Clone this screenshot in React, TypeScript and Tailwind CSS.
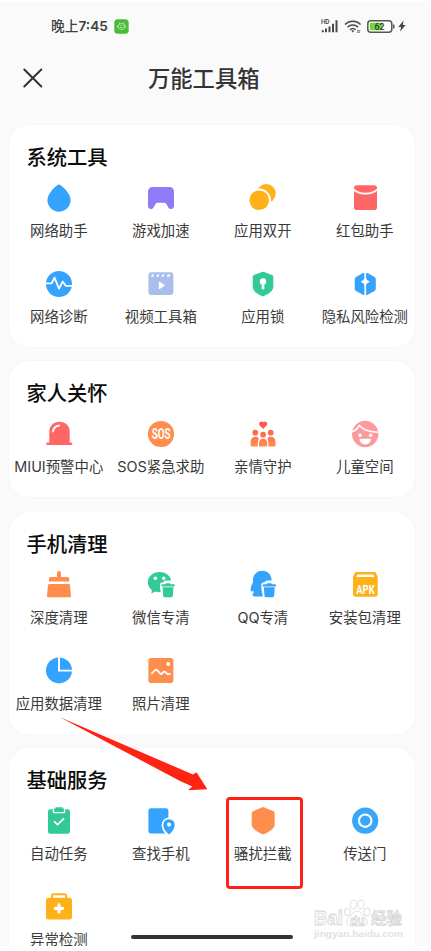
import React from 'react';

type Tool = { label: string; icon: React.ReactNode };
type Section = { title: string; tools: Tool[]; className?: string };

const Icon: React.FC<{ children: React.ReactNode }> = ({ children }) => (
  <svg viewBox="0 0 28 28" className="w-7 h-7 shrink-0 overflow-visible">{children}</svg>
);

// Small bin in the corner of the cleaner icons
const Bin: React.FC<{ color: string }> = ({ color }) => (
  <g>
    <path d="M13 17v-3.500q0-1.800 2-2l1.300-.2q.6-1.900 2.500-1.900h9.500v19H15z" fill="#fff" />
    <path d="M18.300 13.200q.2-1 1.200-1h3q1 0 1.200 1h2.800q1.300 0 1.300 1.200t-1.300 1.200H15.600q-1.300 0-1.300-1.200t1.300-1.200z" fill={color} />
    <path d="M15.600 16.200h10.800l-.5 8.300a1.800 1.800 0 0 1-1.800 1.700h-6.200a1.800 1.800 0 0 1-1.800-1.700z" fill={color} />
  </g>
);

const sections: Section[] = [
  {
    title: '系统工具',
    tools: [
      {
        label: '网络助手',
        icon: <path d="M14 .5c1.800 0 11.600 8.200 11.600 15.600a11.600 11.600 0 0 1-23.200 0C2.400 8.700 12.200.5 14 .5z" fill="#33a3fd" />,
      },
      {
        label: '游戏加速',
        icon: <path d="M5.500 3h17A4.500 4.500 0 0 1 27 7.500V22c0 2.700-2.300 3.400-4.200 2.700-2.200-.8-2.800-5.900-5.300-5.900h-7c-2.500 0-3.100 5.100-5.300 5.900C3.300 25.400 1 24.700 1 22V7.500A4.500 4.500 0 0 1 5.500 3z" fill="#8f7bf8" />,
      },
      {
        label: '应用双开',
        icon: (
          <>
            <circle cx="17.300" cy="9.500" r="9.400" fill="#ffb119" />
            <circle cx="10.200" cy="16.300" r="11.800" fill="#fff" />
            <circle cx="10.200" cy="16.300" r="9.800" fill="#ffb119" />
          </>
        ),
      },
      {
        label: '红包助手',
        icon: (
          <>
            <rect x="3" y="1.200" width="23" height="24.800" rx="2.800" fill="#ff6766" />
            <path d="M2 4.800c6 6.300 19 6.300 25 0" fill="none" stroke="#fff" strokeWidth="1.700" />
          </>
        ),
      },
      {
        label: '网络诊断',
        icon: (
          <>
            <circle cx="14" cy="14" r="13" fill="#33a3fd" />
            <path d="M.5 13.400h6.200l2.800-5.800L14 18.600l3.700-7 3 4.200h7" fill="none" stroke="#fff" strokeWidth="1.800" strokeLinejoin="round" />
          </>
        ),
      },
      {
        label: '视频工具箱',
        icon: (
          <>
            <rect x="1.400" y="2.300" width="25" height="22.700" rx="3" fill="#a9beea" />
            <path d="M4 6.800l1-2.200h2.200l-1 2.200zM9.200 6.800l1-2.200h2.200l-1 2.200zM14.400 6.800l1-2.200h2.200l-1 2.200zM19.600 6.800l1-2.200h2.800l-1 2.200z" fill="#fff" />
            <path d="M12.300 12v6.800l5-3.400z" fill="#fff" stroke="#fff" strokeLinejoin="round" />
          </>
        ),
      },
      {
        label: '应用锁',
        icon: (
          <>
            <path d="M12.900 2q1.100-.4 2.200 0l8 3.100q1.200.5 1.200 1.900v9.500c0 4.500-4.500 7.200-9.300 9.500q-1 .4-2 0C8.200 23.700 3.700 21 3.700 16.500V7q0-1.400 1.200-1.900z" fill="#32ca97" />
            <circle cx="14" cy="11.500" r="3.200" fill="#fff" />
            <path d="M14 12v6.300" stroke="#fff" strokeWidth="2.600" strokeLinecap="round" />
          </>
        ),
      },
      {
        label: '隐私风险检测',
        icon: (
          <>
            <path d="M13.400 2.900v22.200q-.9 0-1.900-.5L5 20.900q-1.300-.7-1.300-2.100V9q0-1.400 1.300-2.100l6.500-3.600q1-.5 1.900-.4zM15.100 2.900v22.200q.9 0 1.900-.5l6.500-3.700q1.300-.7 1.300-2.100V9q0-1.400-1.300-2.100L17 3.300q-1-.5-1.900-.4z" fill="#33a3fd" />
            <path d="M14.250 7.500q.9 3.300 4.200 4.200-3.300.9-4.200 4.200-.9-3.300-4.200-4.200 3.300-.9 4.200-4.200z" fill="#fff" stroke="#fff" strokeWidth=".6" />
          </>
        ),
      },
    ],
  },
  {
    title: '家人关怀',
    className: 'mb-px',
    tools: [
      {
        label: 'MIUI预警中心',
        icon: (
          <>
            <path d="M4.300 23.500V11.500C4.300 6 8.800 1.800 14.500 1.800s10.200 4.200 10.200 9.700v12z" fill="#ff6766" />
            <rect x="1.300" y="22.600" width="26" height="2.500" rx="1" fill="#ff6766" />
            <path d="M8 11.500c.3-3 2.800-5.500 6.200-6" fill="none" stroke="#fff" strokeWidth="1.800" strokeLinecap="round" />
          </>
        ),
      },
      {
        label: 'SOS紧急求助',
        icon: (
          <>
            <circle cx="14" cy="14" r="13.100" fill="#ff8d4e" />
            <text x="4.700" y="19.200" textLength="19" lengthAdjust="spacingAndGlyphs" fill="#fff" className="font-['Roboto',sans-serif] text-[14px] font-bold">SOS</text>
          </>
        ),
      },
      {
        label: '亲情守护',
        icon: (
          <>
            <defs>
              <linearGradient id="family" gradientUnits="userSpaceOnUse" x1="0" y1="2" x2="0" y2="26">
                <stop offset="0" stopColor="#fb5348" />
                <stop offset="1" stopColor="#ff8e50" />
              </linearGradient>
            </defs>
            <g fill="url(#family)">
              <path d="M14.200 9l-3.300-3.300a2.400 2.400 0 0 1 3.300-3.500 2.400 2.400 0 0 1 3.300 3.500z" />
              <circle cx="6.300" cy="12.700" r="2.900" />
              <circle cx="21.700" cy="12.700" r="2.900" />
              <path d="M1.700 26.500v-4.700c0-3 1.800-5 4.600-5 1.500 0 2.300.3 3.300 1.200.5 1.500-.8 2.800-.8 5v3.500z" />
              <path d="M26.500 26.500v-4.700c0-3-1.800-5-4.600-5-1.500 0-2.300.3-3.300 1.200-.5 1.500.8 2.800.8 5v3.500z" />
              <circle cx="14.100" cy="14.700" r="2.900" />
              <path d="M10 26.500v-3.300c0-2.700 1.500-4.400 4.100-4.400s4.100 1.700 4.100 4.400v3.300z" />
            </g>
          </>
        ),
      },
      {
        label: '儿童空间',
        icon: (
          <>
            <circle cx="14.200" cy="14" r="13.200" fill="#fb9b9d" />
            <path d="M.8 11.800C4 11 6.300 8.700 8.300 5.500c4 4.500 9.700 6.600 19.300 6.800" fill="none" stroke="#fff" strokeWidth="1.500" />
            <circle cx="9" cy="15.300" r="1.700" fill="#fff" />
            <circle cx="19.700" cy="15.300" r="1.700" fill="#fff" />
            <path d="M8.500 18.700h11.400c0 3.300-2.400 5.700-5.700 5.700s-5.700-2.400-5.700-5.700z" fill="#fff" />
          </>
        ),
      },
    ],
  },
  {
    title: '手机清理',
    tools: [
      {
        label: '深度清理',
        icon: (
          <g fill="#ff8d4e">
            <path d="M12 6V2.100a2 2 0 0 1 4 0V6h6.300q2 0 2 2v2.500H3.900V8q0-2 2-2z" />
            <path d="M4.500 13h19q1.300 0 1.500 1.300l1 10.400q.1 1.600-1.500 1.600h-21Q1.900 26.300 2 24.700l1-10.400Q3.200 13 4.500 13z" />
          </g>
        ),
      },
      {
        label: '微信专清',
        icon: (
          <>
            <path d="M12.600 1C6 1 .8 5.500.8 11.300c0 3.200 1.600 5.900 4.100 7.800L4.300 22.500l4-2c1.300.5 2.800.8 4.300.8 6.600 0 11.800-4.500 11.800-10S19.200 1 12.600 1z" fill="#32ca97" />
            <circle cx="8.400" cy="7.300" r="1.700" fill="#fff" />
            <circle cx="16.700" cy="7.300" r="1.700" fill="#fff" />
            <Bin color="#32ca97" />
          </>
        ),
      },
      {
        label: 'QQ专清',
        icon: (
          <>
            <path d="M13.300-.2c5.500 0 9.300 4 9.300 9.400v7H19v9.300H6.500c-2.600 0-3.500-1.400-2.700-2.800.5-.9 1.200-1.300 1.200-1.300s-.5-.8-.9-1.600c-.9 1-2.200 1-2.400-.8-.3-2.600 1-5.300 2.300-7.500V9.200c0-5.400 3.800-9.400 9.300-9.400z" fill="#33a3fd" />
            <g className="-translate-x-[0.7px]"><Bin color="#33a3fd" /></g>
          </>
        ),
      },
      {
        label: '安装包清理',
        icon: (
          <>
            <path d="M5.500 1h17.700q1.400 0 1.900 1.300L26.700 6v17q0 2.700-2.700 2.700H4.700Q2 25.700 2 23V6l1.600-3.700Q4.100 1 5.500 1z" fill="#ffb119" />
            <path d="M7.300 3.400h14q1 0 1.300.8l.8 1.900H5.200l.8-1.900q.3-.8 1.300-.8z" fill="#fff" />
            <text x="5.200" y="22.700" textLength="18.500" lengthAdjust="spacingAndGlyphs" fill="#fff" className="font-['Roboto',sans-serif] text-[13px] font-bold">APK</text>
          </>
        ),
      },
      {
        label: '应用数据清理',
        icon: (
          <>
            <circle cx="14" cy="13.400" r="13" fill="#33a3fd" />
            <path d="M14 0v13.600h14" fill="none" stroke="#fff" strokeWidth="1.900" />
          </>
        ),
      },
      {
        label: '照片清理',
        icon: (
          <>
            <rect x="1.400" y="1" width="25" height="25" rx="2.700" fill="#ff8d4e" />
            <circle cx="21.300" cy="7" r="1.900" fill="#fff" />
            <path d="M4.300 16.800l3.700-3.500q1.200-1 2.300 0l3 3.400q.7.600 1.500 0l1.800-1.700q.9-.7 1.800 0l1.700 1.800q.6.500 1.400.3l2-.5" fill="none" stroke="#fff" strokeWidth="1.800" strokeLinejoin="round" />
          </>
        ),
      },
    ],
  },
  {
    title: '基础服务',
    tools: [
      {
        label: '自动任务',
        icon: (
          <>
            <rect x="3" y="2.300" width="22" height="24.400" rx="2.200" fill="#32ca97" />
            <path d="M7.800 0h12.400v5q0 1.300-1.300 1.300H9.100Q7.800 6.300 7.800 5z" fill="#fff" />
            <path d="M10.500.3h7.200v1.200H19V4q0 1-1 1h-8q-1 0-1-1V1.500h1.500z" fill="#32ca97" />
            <path d="M9 14.300l3.600 3.300 6.500-6.200" fill="none" stroke="#fff" strokeWidth="1.800" />
          </>
        ),
      },
      {
        label: '查找手机',
        icon: (
          <>
            <rect x="1.400" y="1.200" width="20" height="25.200" rx="2.500" fill="#33a3fd" />
            <path d="M22 28c-3-2.700-5.700-6.300-5.700-10a5.700 5.700 0 0 1 11.400 0c0 3.700-2.700 7.300-5.700 10z" fill="#33a3fd" stroke="#fff" strokeWidth="3.400" />
            <path d="M22 27.500c-3-2.700-5.700-5.900-5.700-9.600a5.700 5.700 0 0 1 11.400 0c0 3.700-2.700 6.900-5.700 9.600z" fill="#33a3fd" />
            <circle cx="22" cy="17.600" r="2.100" fill="#fff" />
          </>
        ),
      },
      {
        label: '骚扰拦截',
        icon: <path d="M13 .4q1.200-.6 2.400 0l9.100 3.900q1.200.5 1.200 1.900v11.500c0 3.800-5.700 7-10.300 9.300q-1.200.6-2.400 0C8.400 24.700 2.700 21.500 2.700 17.700V6.200q0-1.400 1.200-1.900z" fill="#ff8d4e" />,
      },
      {
        label: '传送门',
        icon: (
          <>
            <circle cx="14.200" cy="13.700" r="13.100" fill="#38a6f9" />
            <circle cx="14.200" cy="13.700" r="6.200" fill="none" stroke="#fff" strokeWidth="2.100" />
          </>
        ),
      },
      {
        label: '异常检测',
        icon: (
          <>
            <rect x="1" y="4.800" width="26" height="21.700" rx="2.500" fill="#ffb119" />
            <path d="M7 6V2.700q0-1.500 1.500-1.500h11q1.500 0 1.500 1.500V6" fill="none" stroke="#ffb119" strokeWidth="2" />
            <path d="M14 11.900v7M10.500 15.400h7" stroke="#fff" strokeWidth="3.200" strokeLinecap="round" />
          </>
        ),
      },
    ],
  },
];

const StatusBar: React.FC = () => (
  <div className="flex items-center justify-between h-[50px] pl-[51px] pr-[24px] text-[#404040]">
    <div className="flex items-center">
      <span className="text-[13.700px] font-medium leading-5 w-[58px] whitespace-nowrap">
        晚上<span className="font-semibold">7:45</span>
      </span>
      <svg viewBox="0 0 15 15" className="w-[15px] h-[15px] ml-[5px]">
        <rect x=".3" y=".3" width="14.400" height="14.400" rx="3.500" fill="#4bb93a" />
        <g fill="none" stroke="#d8f3d0" strokeWidth=".7">
          <rect x="4.300" y="4.700" width="6.500" height="5.600" rx="2.500" />
          <path d="M5 3.500l.8 1.300M10 3.500l-.8 1.300M3.500 6.500v2M11.600 6.500v2M6 8.200q1.500 1 3 0M6 6.600h.8M8.300 6.600h.8" />
        </g>
      </svg>
    </div>
    <div className="flex items-center">
      <svg viewBox="0 0 18 15" className="w-[18px] h-[15px]">
        <text x="0" y="5.400" textLength="8.500" fill="#404040" className="font-['Roboto',sans-serif] text-[6.500px] font-medium">HD</text>
        <path d="M1.800 13.200v-2M5 13.200V9.500M8.500 13.200V7.500M12 13.200V4.800M15.500 13.200V1.300" stroke="#4a4a4a" strokeWidth="2" />
      </svg>
      <svg viewBox="0 0 18 15" className="w-[18px] h-[15px] ml-[5px]">
        <g fill="none" stroke="#4a4a4a" strokeWidth="1.500">
          <path d="M1 5.500c4.400-4.200 11.200-4.200 15.600 0M3.500 8.200c3-2.900 7.600-2.900 10.600 0M6 10.800c1.600-1.500 4-1.500 5.600 0" />
          <path d="M13 11.700h3.300M12.800 13.200h3.300" strokeWidth=".8" />
        </g>
        <path d="M7.200 11.700q1.600-1 3.200 0l-1.600 1.900z" fill="#4a4a4a" />
      </svg>
      <svg viewBox="0 0 28 13" className="w-7 h-[13px] ml-[5px]">
        <rect x=".8" y=".8" width="24" height="11.400" rx="3" fill="#fff" stroke="#555" strokeWidth="1.500" />
        <rect x="2.800" y="2.800" width="12.500" height="7.400" rx="1" fill="#6fd83d" />
        <path d="M26.700 4.500v4" stroke="#555" strokeWidth="1.500" />
        <text x="7.500" y="9.500" textLength="10" lengthAdjust="spacingAndGlyphs" fill="#333" className="font-['Roboto',sans-serif] text-[8.500px] font-medium">62</text>
      </svg>
      <svg viewBox="0 0 8 12" className="w-2 h-3 ml-[3px]">
        <path d="M5.600.6L.3 6.900h2.800L2 11.400l5.700-6.500H4.800z" fill="#444" />
      </svg>
    </div>
  </div>
);

const ToolCard: React.FC<{ section: Section }> = ({ section }) => (
  <section className={`w-[406px] rounded-[20px] bg-white pt-[21px] pb-5 shadow-[0_0_2px_rgba(0,0,0,0.05)] ${section.className || ''}`}>
    <h2 className="pl-[17.500px] h-6 leading-6 text-[20.300px] font-medium text-[#0c0c0c]">{section.title}</h2>
    <div className="grid grid-cols-4 gap-y-[29px] mt-[14px] -mx-px">
      {section.tools.map((tool) => (
        <div key={tool.label} className="flex flex-col items-center">
          <Icon>{tool.icon}</Icon>
          <span className="mt-[9px] mr-[0.4px] h-5 leading-5 text-[14.400px] text-[#3a3a3a] whitespace-nowrap">{tool.label}</span>
        </div>
      ))}
    </div>
  </section>
);

const Watermark: React.FC = () => (
  <svg viewBox="0 0 92 46" className="absolute left-[313px] top-[894px] w-[92px] h-[46px]">
    <g fill="#fff" stroke="#d4d4d4" strokeWidth=".8">
      <text x="1" y="30" textLength="29" lengthAdjust="spacingAndGlyphs" className="font-['Liberation_Sans',sans-serif] font-bold text-[20px]">Bai</text>
      <ellipse cx="34.500" cy="17" rx="3" ry="4" />
      <ellipse cx="40.500" cy="9.500" rx="3" ry="4.300" />
      <ellipse cx="48" cy="9.500" rx="3" ry="4.300" />
      <ellipse cx="54" cy="17" rx="3" ry="4" />
      <path d="M44 16c4 0 5 4 8 6.500s3.500 8-2 8.500h-12c-5.500-.5-5-6-2-8.500s4-6.500 8-6.500z" />
      <text x="37" y="29.500" className="font-['Liberation_Sans',sans-serif] font-bold text-[12px]">du</text>
      <text x="58" y="29" textLength="31" className="font-['Noto_Sans_CJK_SC',sans-serif] font-medium text-[15.500px]">经验</text>
    </g>
    <text x="1" y="42" textLength="89" lengthAdjust="spacingAndGlyphs" fill="#e2e2e2" className="font-['Liberation_Sans',sans-serif] font-bold text-[9.500px]">jingyan.baidu.com</text>
  </svg>
);

const App: React.FC = () => {
  return (
    <div className="w-[431px] h-[951px] bg-white pt-px overflow-hidden font-['Inter','Noto_Sans_CJK_SC',sans-serif]">
      <div className="relative w-[430px] h-[945px] bg-[#fafafa] overflow-hidden">
        <StatusBar />

        {/* Page header */}
        <header className="flex items-center h-[54px] mb-5 pl-[23px]">
          <svg viewBox="0 0 20 20" className="w-5 h-5">
            <path d="M1.300 1.500l17 17M18.300 1.500l-17 17" stroke="#2f2f2f" strokeWidth="1.900" strokeLinecap="round" />
          </svg>
          <h1 className="ml-[105px] mt-0.5 text-[22.300px] leading-8 font-medium text-[#333]">万能工具箱</h1>
        </header>

        <main className="flex flex-col gap-[14px] pl-[9px]">
          {sections.map((section) => (
            <ToolCard key={section.title} section={section} />
          ))}
        </main>

        {/* Markup over the page */}
        <svg viewBox="0 0 150 76" className="absolute left-[59px] top-[715px] w-[150px] h-[76px]">
          <path d="M.5 1L134 58.500l3.500-2.300L148.300 73.300 129 74.300l4.300-3.700L122 65.500z" fill="#ff2314" />
        </svg>
        <div className="absolute left-[226px] top-[796px] w-[77px] h-[92px] border-[3px] border-[#ff2116] rounded-[4px]" />
        <Watermark />
        <div className="absolute left-[131px] top-[934px] w-[162px] h-1 rounded-full bg-[#333]" />
      </div>
    </div>
  );
};

export default App;
